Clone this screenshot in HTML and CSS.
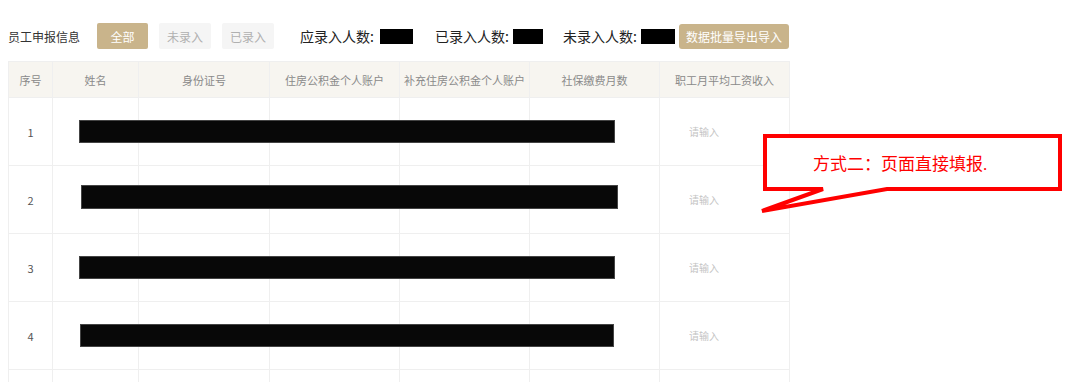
FILE: index.html
```html
<!DOCTYPE html>
<html lang="zh-CN">
<head>
    <meta charset="UTF-8">
    <title>员工申报信息</title>
    <link rel="stylesheet" href="styles.css">
</head>
<body>
    <div class="page">
        <div class="toolbar">
            <span class="toolbar-title">员工申报信息</span>
            <div class="tabs">
                <button class="tab tab-active">全部</button>
                <button class="tab">未录入</button>
                <button class="tab">已录入</button>
            </div>
            <div class="count count-total"><span class="count-label">应录入人数:</span><i class="mask mask-a"></i></div>
            <div class="count count-done"><span class="count-label">已录入人数:</span><i class="mask mask-b"></i></div>
            <div class="count count-todo"><span class="count-label">未录入人数:</span><i class="mask mask-c"></i></div>
            <button class="import-btn">数据批量导出导入</button>
        </div>

        <table class="staff-table">
            <colgroup>
                <col style="width:44px">
                <col style="width:86px">
                <col style="width:131px">
                <col style="width:130px">
                <col style="width:130px">
                <col style="width:130px">
                <col style="width:130px">
            </colgroup>
            <thead>
                <tr>
                    <th>序号</th>
                    <th>姓名</th>
                    <th>身份证号</th>
                    <th>住房公积金个人账户</th>
                    <th>补充住房公积金个人账户</th>
                    <th>社保缴费月数</th>
                    <th>职工月平均工资收入</th>
                </tr>
            </thead>
            <tbody>
                <tr>
                    <td class="num">1</td>
                    <td><div class="redact"></div></td>
                    <td></td><td></td><td></td><td></td>
                    <td><input class="cell-input" placeholder="请输入"></td>
                </tr>
                <tr>
                    <td class="num">2</td>
                    <td><div class="redact redact-2"></div></td>
                    <td></td><td></td><td></td><td></td>
                    <td><input class="cell-input" placeholder="请输入"></td>
                </tr>
                <tr>
                    <td class="num">3</td>
                    <td><div class="redact"></div></td>
                    <td></td><td></td><td></td><td></td>
                    <td><input class="cell-input" placeholder="请输入"></td>
                </tr>
                <tr>
                    <td class="num">4</td>
                    <td><div class="redact redact-4"></div></td>
                    <td></td><td></td><td></td><td></td>
                    <td><input class="cell-input" placeholder="请输入"></td>
                </tr>
                <tr>
                    <td></td><td></td><td></td><td></td><td></td><td></td><td></td>
                </tr>
            </tbody>
        </table>

        <div class="callout">
            <svg class="callout-shape" width="312" height="86" viewBox="0 0 312 86">
                <path d="M10 8 H305 V61 H132 L7 83 L68 61 H10 Z" fill="#fff" stroke="#f00" stroke-width="4" stroke-linejoin="miter"/>
            </svg>
            <span class="callout-text">方式二：页面直接填报.</span>
        </div>
    </div>
</body>
</html>
```

FILE: styles.css
```css
* {
    box-sizing: border-box;
}

body {
    margin: 0;
    background: #fff;
    font-family: "Noto Sans CJK SC", "Noto Sans", sans-serif;
    overflow: hidden;
}

.page {
    position: relative;
    padding: 23px 8px 0;
    width: 1080px;
    height: 382px;
    overflow: hidden;
}

.toolbar {
    display: flex;
    align-items: center;
    height: 26px;
    margin-bottom: 12px;
}

.toolbar-title {
    width: 89px;
    font-size: 12px;
    color: #333;
}

.tabs {
    display: flex;
    gap: 11px;
    width: 203px;
}

.tab {
    width: 52px;
    height: 26px;
    border: none;
    border-radius: 2px;
    background: #f5f5f5;
    color: #b0b0b0;
    font-family: inherit;
    font-size: 12px;
    padding: 0;
}

.tab-active {
    width: 51px;
    background: #c9b48b;
    color: #fff;
}

.count {
    display: flex;
    align-items: center;
    font-size: 14px;
    color: #222;
}

.count-label {
    width: 78px;
}

.count-total { width: 135px; }
.count-total .count-label { width: 80px; }
.count-done { width: 128px; }
.count-todo { width: 116px; }

.mask {
    display: inline-block;
    height: 15px;
    background: #000;
}

.mask-a { width: 33px; }
.mask-b { width: 30px; }
.mask-c { width: 34px; }

.import-btn {
    width: 110px;
    height: 25px;
    border: none;
    border-radius: 3px;
    background: #c9b48b;
    color: #fff;
    font-family: inherit;
    font-size: 12px;
    padding: 0;
}

.staff-table {
    table-layout: fixed;
    border-collapse: collapse;
    width: 781px;
}

.staff-table th,
.staff-table td {
    border: 1px solid #efefef;
    text-align: center;
    vertical-align: middle;
    padding: 0;
}

.staff-table th {
    height: 36px;
    background: #f7f5f0;
    color: #8a8a8a;
    font-size: 11px;
    font-weight: normal;
}

.staff-table td {
    height: 68px;
}

.staff-table .num {
    font-size: 11px;
    color: #555;
}

.redact {
    position: relative;
    z-index: 1;
    width: 536px;
    height: 23px;
    margin-left: 26px;
    background: #080808;
    border: 1px solid #444;
}

.redact-2 {
    width: 537px;
    height: 24px;
    margin-left: 28px;
    margin-top: -6px;
}

.redact-4 {
    width: 534px;
    margin-left: 27px;
}

.cell-input {
    display: block;
    width: 110px;
    margin-left: 17px;
    border: none;
    outline: none;
    padding: 4px 12px;
    font-family: inherit;
    font-size: 10px;
    background: transparent;
}

.cell-input::placeholder {
    color: #c4c4c4;
}

.callout {
    position: absolute;
    left: 755px;
    top: 128px;
    width: 312px;
    height: 86px;
}

.callout-shape {
    display: block;
}

.callout-text {
    position: absolute;
    left: 58px;
    top: 22px;
    font-family: "Liberation Serif", "Noto Sans CJK SC", serif;
    font-size: 17px;
    color: #f00;
    white-space: nowrap;
}
```
